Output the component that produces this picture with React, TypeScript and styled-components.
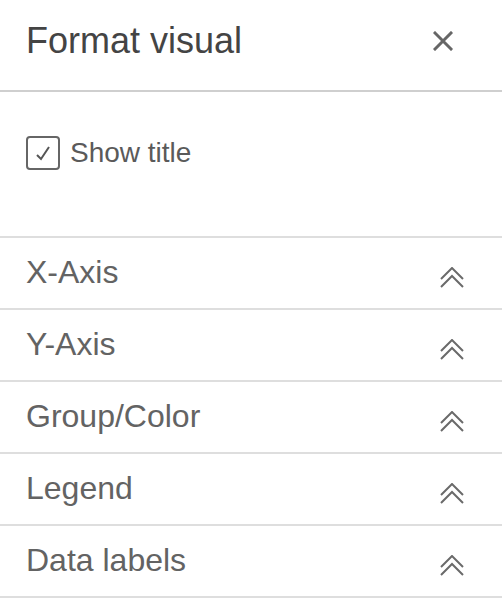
import React, { useState } from "react";
import styled, { createGlobalStyle } from "styled-components";

const GlobalStyle = createGlobalStyle`
    html, body {
        margin: 0;
        padding: 0;
        background: #ffffff;
    }
    body {
        font-family: "Liberation Sans", Arial, Helvetica, sans-serif;
    }
`;

const Panel = styled.div`
    width: 502px;
    height: 602px;
    overflow: hidden;
    background: #ffffff;
    display: flex;
    flex-direction: column;
`;

const Header = styled.header`
    height: 92px;
    flex-shrink: 0;
    box-sizing: border-box;
    padding: 0 49px 9px 26px;
    display: flex;
    align-items: center;
    justify-content: space-between;
    border-bottom: 2px solid #cfcfcf;
`;

const Title = styled.h1`
    margin: 0;
    font-size: 36px;
    font-weight: 400;
    color: #444444;
    line-height: 1;
`;

const CloseButton = styled.button`
    border: none;
    background: none;
    padding: 0;
    width: 20px;
    height: 20px;
    display: flex;
    cursor: pointer;
`;

const TitleSection = styled.section`
    height: 146px;
    flex-shrink: 0;
    box-sizing: border-box;
    padding: 44px 26px 0;
    border-bottom: 2px solid #dedede;
`;

const CheckLabel = styled.label`
    display: flex;
    align-items: center;
    gap: 10px;
    font-size: 28px;
    color: #5a5a5a;
    cursor: pointer;
    line-height: 34px;
`;

const Box = styled.span`
    width: 34px;
    height: 34px;
    box-sizing: border-box;
    border: 2px solid #666666;
    border-radius: 4px;
    display: flex;
    align-items: center;
    justify-content: center;
`;

const Row = styled.div`
    height: 72px;
    flex-shrink: 0;
    box-sizing: border-box;
    padding: 0 38px 0 26px;
    display: flex;
    align-items: center;
    justify-content: space-between;
    border-bottom: 2px solid #dedede;
    cursor: pointer;
`;

const RowLabel = styled.span`
    font-size: 32px;
    color: #636363;
    padding-bottom: 2px;
`;

const Chevron = styled.svg`
    margin-top: 8px;
    display: block;
`;

const sections = ["X-Axis", "Y-Axis", "Group/Color", "Legend", "Data labels"];

function App() {
    const [showTitle, setShowTitle] = useState(true);

    return (
        <>
            <GlobalStyle />
            <Panel>
                <Header>
                    <Title>Format visual</Title>
                    <CloseButton aria-label="Close">
                        <svg width="20" height="20" viewBox="0 0 20 20">
                            <path d="M2 2 L18 18 M18 2 L2 18" stroke="#666" strokeWidth="3" strokeLinecap="square" />
                        </svg>
                    </CloseButton>
                </Header>
                <TitleSection>
                    <CheckLabel onClick={() => setShowTitle(!showTitle)}>
                        <Box>
                            {showTitle && (
                                <svg width="18" height="18" viewBox="0 0 18 18">
                                    <path d="M3 11 L7 15 L15 3" fill="none" stroke="#555" strokeWidth="2" />
                                </svg>
                            )}
                        </Box>
                        Show title
                    </CheckLabel>
                </TitleSection>
                {sections.map(name => (
                    <Row key={name}>
                        <RowLabel>{name}</RowLabel>
                        <Chevron width="24" height="21" viewBox="0 0 24 21">
                            <path d="M1 12 L12 1 L23 12 M1 20 L12 9 L23 20" fill="none" stroke="#6a6a6a" strokeWidth="2" />
                        </Chevron>
                    </Row>
                ))}
            </Panel>
        </>
    );
}

export default App;
